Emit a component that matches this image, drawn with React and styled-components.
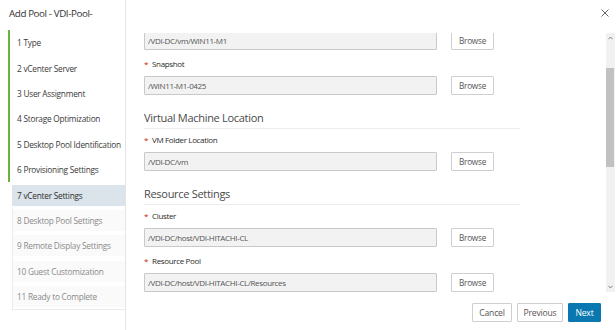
import React, { useLayoutEffect, useRef } from 'react';
import styled, { createGlobalStyle } from 'styled-components';

const GlobalStyle = createGlobalStyle`
  html, body { margin: 0; padding: 0; background: #fff; }
  body {
    font-family: "Open Sans", "Noto Sans", "Liberation Sans", sans-serif;
    color: #333;
  }
  * { box-sizing: border-box; }
`;

const Dialog = styled.div`
  width: 616px;
  height: 330px;
  display: grid;
  grid-template-columns: 126px 1fr;
  overflow: hidden;
  background: #fff;
`;

const Sidebar = styled.aside`
  border-right: 1px solid #e4e4e4;
  display: flex;
  flex-direction: column;
`;

const Title = styled.h1`
  margin: 0;
  height: 27px;
  line-height: 27px;
  padding: 0 9px;
  font-size: 9.8px;
  letter-spacing: -0.4px;
  font-weight: 400;
  color: #313131;
  white-space: nowrap;
`;

const StepList = styled.nav`
  margin-top: 3px;
  padding-left: 8px;
  display: flex;
  flex-direction: column;
`;

const DoneGroup = styled.div`
  border-left: 2px solid #6cb33e;
  display: flex;
  flex-direction: column;
`;

const FutureGroup = styled.div`
  margin-left: 4px;
  border-left: 1px solid #ececec;
  border-bottom: 1px solid #ececec;
  display: flex;
  flex-direction: column;
`;

const Step = styled.div`
  font-size: 8.3px;
  letter-spacing: -0.25px;
  white-space: nowrap;
  display: flex;
  align-items: center;
  ${(p) =>
    p.$state === 'done'
      ? `height: 25.4px; padding-left: 7px; color: #3a3a3a;`
      : p.$state === 'current'
      ? `height: 21px; margin: 2.2px 0 2.2px 4px; padding-left: 5px; background: #dae4ea; color: #2e2e2e;`
      : `height: 21px; margin: 2.2px 0; padding-left: 4px; background: #fafafa; color: #8a8a8a;`}
`;

const Main = styled.main`
  display: flex;
  flex-direction: column;
  min-width: 0;
`;

const Header = styled.header`
  height: 33px;
  display: flex;
  justify-content: flex-end;
  align-items: flex-start;
  padding: 9px 7px 0 0;
`;

const CloseButton = styled.button`
  width: 8px;
  height: 8px;
  padding: 0;
  border: 0;
  background: none;
  display: flex;
`;

const Body = styled.div`
  height: 259px;
  display: flex;
`;

const Scroller = styled.div`
  flex: 1;
  overflow: hidden;
  padding: 0 0 40px 18px;
`;

const SectionHeading = styled.h2`
  width: 376px;
  margin: 15px 0 0;
  height: 19px;
  line-height: 16px;
  padding-bottom: 2px;
  border-bottom: 1px solid #ececec;
  font-size: 11px;
  letter-spacing: -0.3px;
  font-weight: 400;
  color: #4a4a4a;
`;

const Field = styled.div`
  margin-top: ${(p) => (p.$first ? '0' : p.$afterHeading ? '5px' : '8px')};
`;

const Label = styled.label`
  display: block;
  height: 12px;
  line-height: 12px;
  font-size: 8px;
  letter-spacing: -0.35px;
  color: #2b2b2b;
  margin-bottom: 6px;
`;

const Required = styled.span`
  color: #c92100;
  margin-right: 4px;
`;

const InputRow = styled.div`
  display: flex;
  align-items: center;
  gap: 14px;
`;

const TextInput = styled.input`
  width: 293px;
  height: 19px;
  border: 1px solid #c9c9c9;
  border-radius: 1px;
  background: #f2f2f2;
  font: inherit;
  font-size: 8px;
  letter-spacing: -0.35px;
  color: #555;
  padding: 0 3px;
  outline: none;
`;

const BrowseButton = styled.button`
  width: 43px;
  height: 19px;
  border: 1px solid #cfcfcf;
  border-radius: 1px;
  background: #fff;
  font: inherit;
  font-size: 8.2px;
  letter-spacing: -0.2px;
  color: #555;
  padding: 0;
`;

const Scrollbar = styled.div`
  width: 9px;
  margin-right: 1px;
  background: #f1f1f1;
  display: flex;
  flex-direction: column;
`;

const ScrollArrow = styled.div`
  height: 10px;
  display: flex;
  align-items: center;
  justify-content: center;
`;

const Track = styled.div`
  flex: 1;
  display: flex;
  flex-direction: column;
  align-items: flex-start;
`;

const Thumb = styled.div`
  width: 8px;
  height: 99px;
  margin-top: 25px;
  background: #c1c1c1;
`;

const Footer = styled.footer`
  flex: 1;
  display: flex;
  justify-content: flex-end;
  align-items: flex-start;
  gap: 5px;
  padding: 11px 15px 0 0;
`;

const FooterButton = styled.button`
  height: 19px;
  width: ${(p) => p.$width}px;
  padding: 0;
  border-radius: 1px;
  border: 1px solid ${(p) => (p.$primary ? '#0a78b0' : '#cfcfcf')};
  background: ${(p) => (p.$primary ? '#0a78b0' : '#fff')};
  color: ${(p) => (p.$primary ? '#fff' : '#555')};
  font: inherit;
  font-size: 8.6px;
  letter-spacing: -0.2px;
`;

const steps = [
  '1 Type',
  '2 vCenter Server',
  '3 User Assignment',
  '4 Storage Optimization',
  '5 Desktop Pool Identification',
  '6 Provisioning Settings',
  '7 vCenter Settings',
  '8 Desktop Pool Settings',
  '9 Remote Display Settings',
  '10 Guest Customization',
  '11 Ready to Complete',
];

function Chevron({ up }) {
  return (
    <svg width="5" height="4" viewBox="0 0 5 4">
      <polyline
        points={up ? '0.5,3.2 2.5,1 4.5,3.2' : '0.5,0.8 2.5,3 4.5,0.8'}
        fill="none"
        stroke="#777"
        strokeWidth="0.9"
      />
    </svg>
  );
}

function PathField({ label, value, afterHeading, first }) {
  return (
    <Field $afterHeading={afterHeading} $first={first}>
      {label && (
        <Label>
          <Required>*</Required>
          {label}
        </Label>
      )}
      <InputRow>
        <TextInput readOnly value={value} />
        <BrowseButton>Browse</BrowseButton>
      </InputRow>
    </Field>
  );
}

export default function App() {
  const scrollerRef = useRef(null);

  useLayoutEffect(() => {
    if (scrollerRef.current) scrollerRef.current.scrollTop = 2;
  }, []);

  return (
    <>
      <GlobalStyle />
      <Dialog>
        <Sidebar>
          <Title>Add Pool - VDI-Pool-</Title>
          <StepList>
            <DoneGroup>
              {steps.slice(0, 6).map((s) => (
                <Step key={s} $state="done">{s}</Step>
              ))}
            </DoneGroup>
            <Step $state="current">{steps[6]}</Step>
            <FutureGroup>
              {steps.slice(7).map((s) => (
                <Step key={s} $state="future">{s}</Step>
              ))}
            </FutureGroup>
          </StepList>
        </Sidebar>
        <Main>
          <Header>
            <CloseButton aria-label="Close">
              <svg width="8" height="8" viewBox="0 0 8 8">
                <path d="M0.5 0.5L7.5 7.5M7.5 0.5L0.5 7.5" stroke="#666" strokeWidth="1" />
              </svg>
            </CloseButton>
          </Header>
          <Body>
            <Scroller ref={scrollerRef}>
              <PathField first value="/VDI-DC/vm/WIN11-M1" />
              <PathField label="Snapshot" value="/WIN11-M1-0425" />
              <SectionHeading>Virtual Machine Location</SectionHeading>
              <PathField afterHeading label="VM Folder Location" value="/VDI-DC/vm" />
              <SectionHeading>Resource Settings</SectionHeading>
              <PathField afterHeading label="Cluster" value="/VDI-DC/host/VDI-HITACHI-CL" />
              <PathField label="Resource Pool" value="/VDI-DC/host/VDI-HITACHI-CL/Resources" />
            </Scroller>
            <Scrollbar>
              <ScrollArrow>
                <Chevron up />
              </ScrollArrow>
              <Track>
                <Thumb />
              </Track>
              <ScrollArrow>
                <Chevron />
              </ScrollArrow>
            </Scrollbar>
          </Body>
          <Footer>
            <FooterButton $width={40}>Cancel</FooterButton>
            <FooterButton $width={46}>Previous</FooterButton>
            <FooterButton $width={33} $primary>Next</FooterButton>
          </Footer>
        </Main>
      </Dialog>
    </>
  );
}
